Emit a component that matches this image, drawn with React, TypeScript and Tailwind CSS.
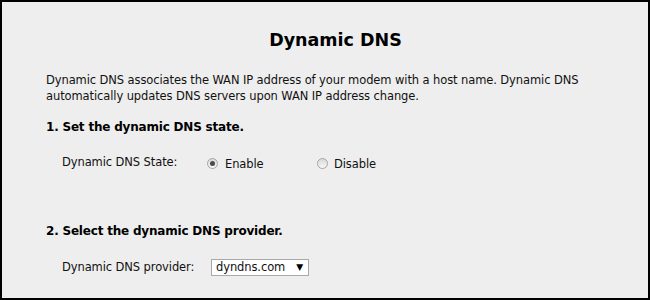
const Radio = ({ checked }: { checked?: boolean }) => (
  <span className="flex h-[11px] w-[11px] items-center justify-center rounded-full border border-[#a4a4a4] bg-gradient-to-b from-[#d9d9d9] to-[#f7f7f7]">
    {checked && <span className="h-[5px] w-[5px] rounded-full bg-[#4a4a4a]" />}
  </span>
);

export default function App() {
  return (
    <div className="h-[300px] w-[650px] border-2 border-black bg-[#eeeeee] pl-[44px] pr-[23px] font-['DejaVu_Sans',sans-serif] text-[#111]">
      <h1 className="mt-[26px] text-center text-[17.5px] font-bold leading-[24px] text-black">
        Dynamic DNS
      </h1>

      <p className="mt-[20px] text-[11.5px] leading-[16px] tracking-[-0.1px]">
        Dynamic DNS associates the WAN IP address of your modem with a host name. Dynamic DNS
        <br />
        automatically updates DNS servers upon WAN IP address change.
      </p>

      <h2 className="mt-[15px] text-[12px] font-bold leading-[16px] tracking-[-0.2px] text-black">
        1. Set the dynamic DNS state.
      </h2>

      <div className="mt-[20px] flex h-[16px] items-center pl-[16px] text-[11.5px] tracking-[-0.1px]">
        <span className="w-[145px]">Dynamic DNS State:</span>
        <label className="flex w-[110px] items-center gap-[7px]">
          <Radio checked />
          <span className="translate-y-[2px]">Enable</span>
        </label>
        <label className="flex items-center gap-[6px]">
          <Radio />
          <span className="translate-y-[2px]">Disable</span>
        </label>
      </div>

      <h2 className="mt-[52px] text-[12px] font-bold leading-[16px] tracking-[-0.2px] text-black">
        2. Select the dynamic DNS provider.
      </h2>

      <div className="mt-[20px] flex items-center pl-[16px] text-[11.5px] tracking-[-0.1px]">
        <span className="w-[149px]">Dynamic DNS provider:</span>
        <div className="flex h-[17px] w-[98px] items-center justify-between border border-[#a9a9a9] bg-white pl-[4px] pr-[5px]">
          <span>dyndns.com</span>
          <span className="text-[9px] text-black">▼</span>
        </div>
      </div>
    </div>
  );
}
